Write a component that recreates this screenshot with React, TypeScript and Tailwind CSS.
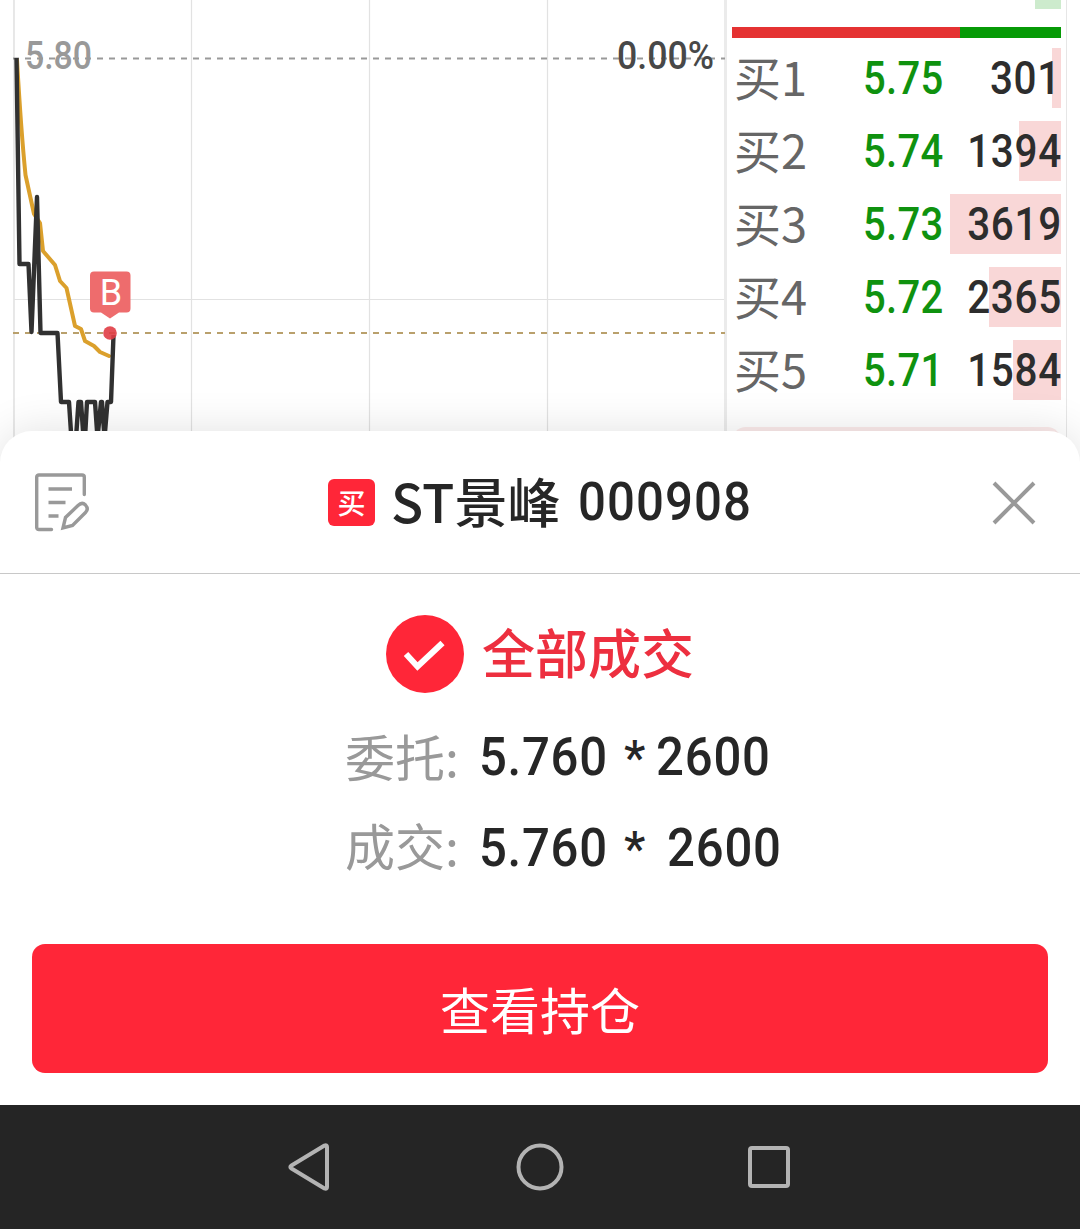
import React from 'react';

const LEVELS = [
  { label: '买1', price: '5.75', volume: '301', depth: 9 },
  { label: '买2', price: '5.74', volume: '1394', depth: 42 },
  { label: '买3', price: '5.73', volume: '3619', depth: 111 },
  { label: '买4', price: '5.72', volume: '2365', depth: 72 },
  { label: '买5', price: '5.71', volume: '1584', depth: 48 },
];

const CJK = "font-['Noto_Sans_CJK_SC',sans-serif]";
const DIGITS = "font-['Roboto',sans-serif] font-medium whitespace-pre";

function Chart() {
  return (
    <svg width="732" height="471" viewBox="0 0 732 471" className="block shrink-0">
      <g stroke="#e2e2e2" strokeWidth="1.2">
        <path d="M14 0V471" strokeWidth="1.6" />
        <path d="M191.5 0V471M369.5 0V471M547.5 0V471M14 299.5H725" />
        <path d="M725.5 0V471" strokeWidth="3" stroke="#ebebeb" />
      </g>
      <path d="M13 58.5H725" stroke="#999" strokeWidth="2" strokeDasharray="6 6" />
      <path d="M13 333H725" stroke="#b9a06c" strokeWidth="2" strokeDasharray="6 6" />
      <g fontFamily="Roboto, sans-serif" fontWeight="500" fontSize="38">
        <text x="25" y="68.5" fill="#999" textLength="67" lengthAdjust="spacingAndGlyphs">5.80</text>
        <text x="617" y="68.5" fill="#484848" textLength="97" lengthAdjust="spacingAndGlyphs">0.00%</text>
      </g>
      <path
        d="M17 60Q21 130 25.5 175L34 214L40 223L43 251L55 265L60 281L66.5 288L75 326L81 329L85 341L94 346L100 352L109 356"
        fill="none" stroke="#dba02c" strokeWidth="4" strokeLinejoin="round" strokeLinecap="round"
      />
      <path
        d="M16.5 58L19.5 264H28.5L31.5 332L37 197L40.5 333H57.5L61 402H69L71.5 440L76 438L78.5 402H81L83.5 438H85L87 402H95L97.5 438L101 402H102L104.5 438L107.5 402H111L113.5 335"
        fill="none" stroke="#313131" strokeWidth="4.4" strokeLinejoin="round"
      />
      <circle cx="110" cy="333" r="6.8" fill="#e03c44" fillOpacity="0.9" />
      <path
        d="M94 271.5H126.5Q130.5 271.5 130.5 275.5V308.5Q130.5 312.5 126.5 312.5H119L110 318.5L101 312.5H94Q90 312.5 90 308.5V275.5Q90 271.5 94 271.5Z"
        fill="#ee6c6d"
      />
      <text x="111" y="305" fill="#fff" fontFamily="Roboto, sans-serif" fontSize="36" textAnchor="middle">B</text>
    </svg>
  );
}

function OrderBook() {
  return (
    <div className="flex w-[329px] shrink-0 flex-col">
      <div className="h-[9px] w-[26px] self-end bg-[#cdebcd]" />
      <div className="mt-[18px] flex h-[11px]">
        <div className="w-[228px] bg-[#e53232]" />
        <div className="flex-1 bg-[#069a06]" />
      </div>
      <div className="mt-[10px] flex flex-col gap-[13px]">
        {LEVELS.map((l) => (
          <div key={l.label} className="relative flex h-[60px] items-center">
            <div className="absolute inset-y-0 right-0 bg-[#f9d7d7]" style={{ width: l.depth }} />
            <span className={`${CJK} relative w-[131px] shrink-0 pb-[4px] pl-[2px] text-[47px] leading-[56px] text-[#666]`}>{l.label}</span>
            <span className={`${DIGITS} relative w-[90px] shrink-0 origin-left scale-x-[0.86] text-[46.5px] leading-[60px] tracking-[0.4px] text-[#0f920f]`}>{l.price}</span>
            <span className={`${DIGITS} relative flex flex-1 origin-right scale-x-[0.87] justify-end text-[46.5px] leading-[60px] tracking-[0.8px] text-[#2d2d2d]`}>{l.volume}</span>
          </div>
        ))}
      </div>
      <div className="mt-[27px] h-[44px] rounded-t-[14px] bg-[#fbeaea]" />
    </div>
  );
}

function NoteIcon() {
  return (
    <svg width="56" height="60" viewBox="0 0 56 60" fill="none" stroke="#999" strokeWidth="3.4">
      <path d="M17.5 56.5H5Q2.7 56.5 2.7 54.5V4Q2.700 2 5 2H48Q50.3 2 50.3 4V21.5" strokeLinecap="round" />
      <path d="M14.5 16H38M14.5 29.5H31.5M14.5 43H24.5" />
      <path d="M29 55L31.5 44.500L44 32.500Q48 28.500 51.500 32Q55 36 51.500 39.500L38.500 52.500Z" />
    </svg>
  );
}

function SheetHeader() {
  return (
    <div className="flex h-[143px] items-center border-b border-[#c8c8c8]">
      <div className="ml-[34px] mt-[1px] w-[294px]">
        <NoteIcon />
      </div>
      <div className={`${CJK} flex size-[47px] items-center justify-center rounded-[6px] bg-[#ff2638] text-[28px] leading-none text-white`}>
        <span className="font-medium">买</span>
      </div>
      <span className={`${CJK} ml-[16px] w-[187px] whitespace-nowrap pb-[5px] text-[53px] font-medium leading-[60px] text-[#262626]`}>ST景峰</span>
      <span className={`${DIGITS} origin-left scale-x-[0.91] text-[54px] leading-[60px] tracking-[1.2px] text-[#262626]`}>000908</span>
      <svg className="ml-auto mr-[43px] mt-[2px]" width="46" height="46" viewBox="0 0 46 46" stroke="#999" strokeWidth="4">
        <path d="M3 3L43 43M43 3L3 43" strokeLinecap="butt" />
      </svg>
    </div>
  );
}

type DetailRowProps = { label: string; price: string; quantity: string; gap: string; lift: string };

function DetailRow({ label, price, quantity, gap, lift }: DetailRowProps) {
  return (
    <div className="flex h-[60px] items-center text-[#262626]">
      <span className={`${CJK} ${lift} w-[134px] whitespace-nowrap text-[50px] leading-[56px] text-[#999]`}>{label}</span>
      <span className={`${DIGITS} w-[145px] origin-left scale-x-[0.9] pb-[2px] text-[54.5px] leading-[58px] tracking-[0.8px]`}>{price}</span>
      <span className={`${DIGITS} w-[22px] pt-[2px] text-[48px] leading-[60px]`}>*</span>
      <span className={`${DIGITS} ${gap} origin-left scale-x-[0.9] pb-[2px] text-[54.5px] leading-[58px] tracking-[0.9px]`}>{quantity}</span>
    </div>
  );
}

function NavBar() {
  return (
    <div className="relative flex h-[124px] items-center bg-[#252525]">
      <svg className="ml-[286px]" width="46" height="50" viewBox="0 0 46 50" fill="none" stroke="#b3b3b3" strokeWidth="4">
        <path d="M5.5 23.500Q3.200 25 5.500 26.500L38.500 46.500Q41 47.500 41 45V5Q41 2.500 38.500 3.500Z" strokeLinejoin="round" />
      </svg>
      <svg className="ml-[183px]" width="50" height="50" viewBox="0 0 50 50" fill="none" stroke="#b3b3b3" strokeWidth="4">
        <circle cx="25" cy="25" r="21.500" />
      </svg>
      <div className="ml-[183px] size-[42px] rounded-[4px] border-4 border-[#b3b3b3]" />
    </div>
  );
}

export default function App() {
  return (
    <div className="h-[1229px] w-[1080px] overflow-hidden bg-white">
      <div className="flex h-[471px]">
        <Chart />
        <OrderBook />
        <div className="ml-[5px] w-px bg-[#e6e6e6]" />
      </div>
      <div className="relative -mt-[40px] h-[674px] rounded-t-[32px] bg-white shadow-[0_0_44px_rgba(0,0,0,0.12)]">
        <SheetHeader />
        <div className="flex h-[160px] pt-[41px]">
          <svg className="ml-[386px]" width="78" height="78" viewBox="0 0 78 78">
            <circle cx="39" cy="39" r="39" fill="#ff2638" />
            <path d="M20 39L31.5 51.5L56.5 28" fill="none" stroke="#fff" strokeWidth="6" />
          </svg>
          <span className={`${CJK} ml-[18px] text-[53px] font-medium leading-[72px] text-[#ed2f3f]`}>全部成交</span>
        </div>
        <div className="ml-[345px] -mt-[7px] flex flex-col gap-[31px]">
          <DetailRow label="委托:" price="5.760" quantity="2600" gap="ml-[10px]" lift="pb-[5px]" />
          <DetailRow label="成交:" price="5.760" quantity="2600" gap="ml-[21px]" lift="pb-[9px]" />
        </div>
        <button className={`${CJK} ml-8 mt-[66px] block h-[129px] w-[1016px] rounded-[13px] bg-[#ff2638] text-[50px] leading-[129px] text-white`}>
          查看持仓
        </button>
      </div>
      <NavBar />
    </div>
  );
}
